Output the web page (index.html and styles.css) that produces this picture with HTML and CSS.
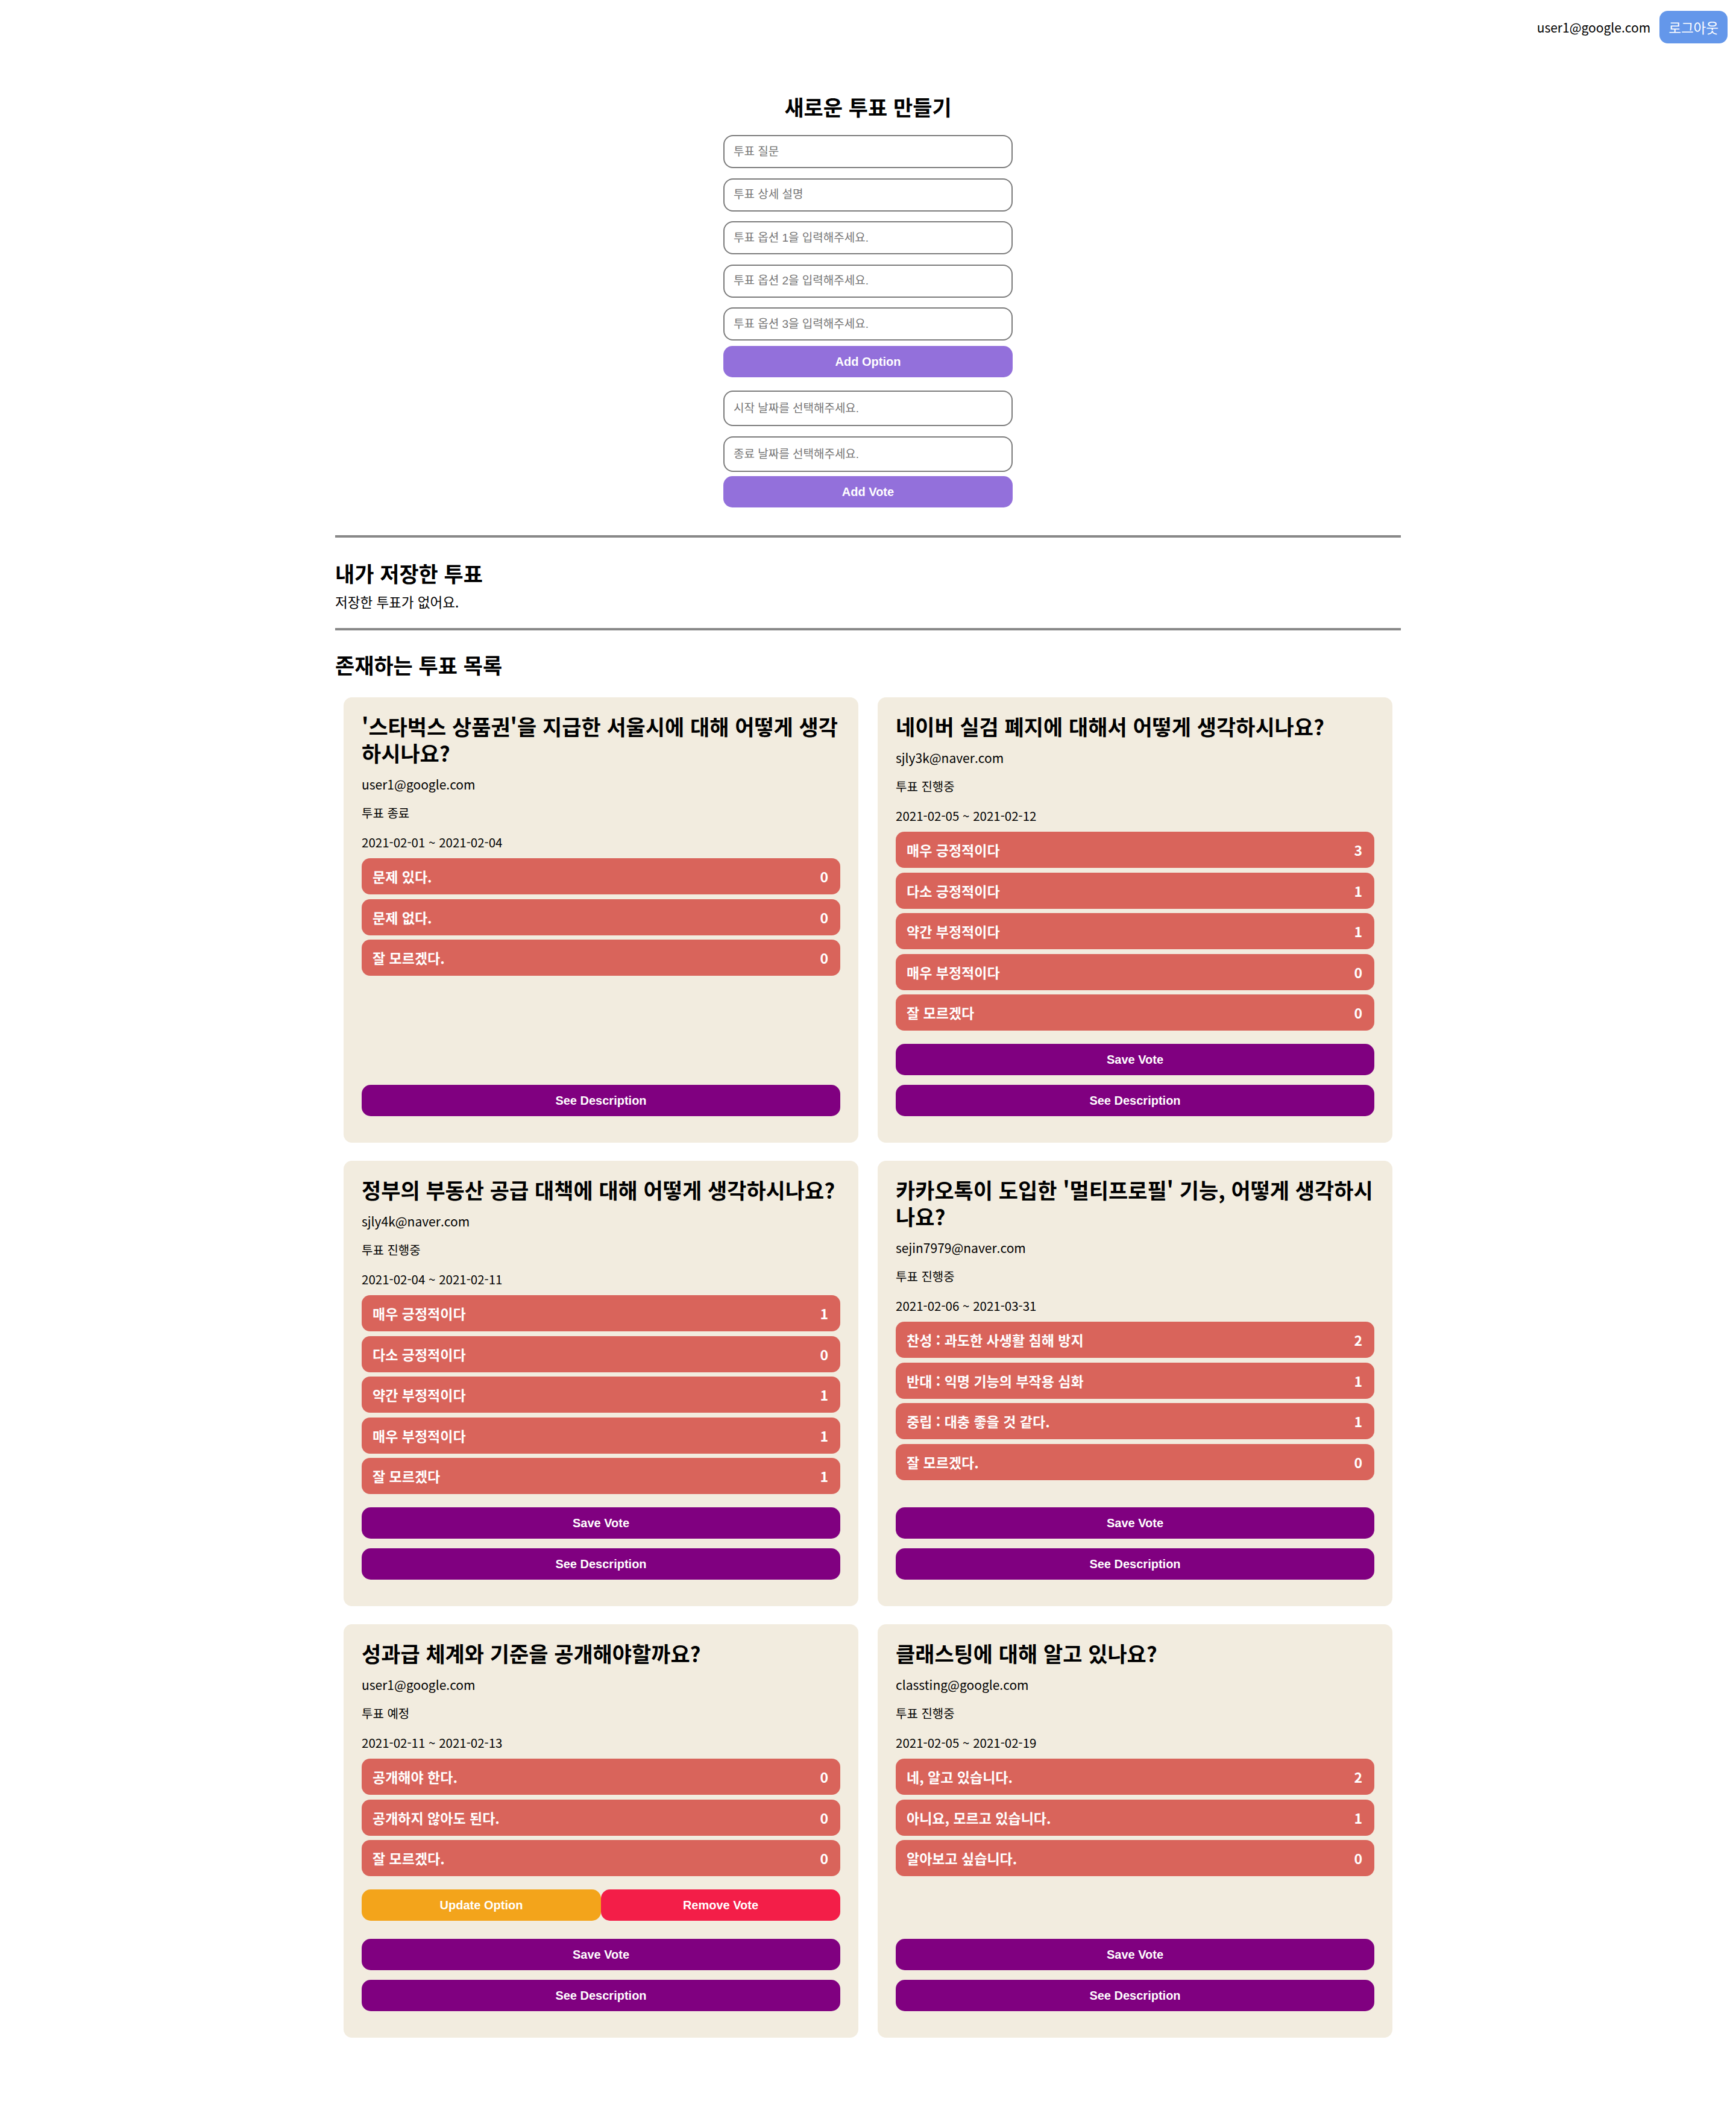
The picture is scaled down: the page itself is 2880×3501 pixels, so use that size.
FILE: index.html
```html
<!DOCTYPE html>
<html lang="ko">
<head>
<meta charset="utf-8">
<title>투표</title>
<link rel="stylesheet" href="styles.css">
</head>
<body>
<header class="topbar">
  <span class="topbar-email">user1@google.com</span>
  <button class="logout" type="button">로그아웃</button>
</header>

<form class="create">
  <h2 class="create-title">새로운 투표 만들기</h2>
  <div class="option-fields">
    <input class="field" type="text" placeholder="투표 질문">
    <input class="field" type="text" placeholder="투표 상세 설명">
    <input class="field" type="text" placeholder="투표 옵션 1을 입력해주세요.">
    <input class="field" type="text" placeholder="투표 옵션 2을 입력해주세요.">
    <input class="field" type="text" placeholder="투표 옵션 3을 입력해주세요.">
  </div>
  <button class="btn btn-lavender btn-add-option" type="button">Add Option</button>
  <div class="date-fields">
    <input class="field field-date" type="text" placeholder="시작 날짜를 선택해주세요.">
    <input class="field field-date" type="text" placeholder="종료 날짜를 선택해주세요.">
  </div>
  <button class="btn btn-lavender btn-add-vote" type="button">Add Vote</button>
</form>

<hr class="divider divider-first">

<section class="section saved">
  <h3 class="section-title">내가 저장한 투표</h3>
  <p class="saved-empty">저장한 투표가 없어요.</p>
</section>

<hr class="divider divider-second">

<section class="section list">
  <h3 class="section-title">존재하는 투표 목록</h3>
  <div class="card-grid">

    <article class="card">
      <h4 class="card-title">'스타벅스 상품권'을 지급한 서울시에 대해 어떻게 생각하시나요?</h4>
      <p class="card-author">user1@google.com</p>
      <p class="card-status">투표 종료</p>
      <p class="card-period">2021-02-01 ~ 2021-02-04</p>
      <ul class="options">
        <li class="option"><span>문제 있다.</span><span>0</span></li>
        <li class="option"><span>문제 없다.</span><span>0</span></li>
        <li class="option"><span>잘 모르겠다.</span><span>0</span></li>
      </ul>
      <div class="actions">
        <button class="btn btn-purple" type="button">See Description</button>
      </div>
    </article>

    <article class="card">
      <h4 class="card-title">네이버 실검 폐지에 대해서 어떻게 생각하시나요?</h4>
      <p class="card-author">sjly3k@naver.com</p>
      <p class="card-status">투표 진행중</p>
      <p class="card-period">2021-02-05 ~ 2021-02-12</p>
      <ul class="options">
        <li class="option"><span>매우 긍정적이다</span><span>3</span></li>
        <li class="option"><span>다소 긍정적이다</span><span>1</span></li>
        <li class="option"><span>약간 부정적이다</span><span>1</span></li>
        <li class="option"><span>매우 부정적이다</span><span>0</span></li>
        <li class="option"><span>잘 모르겠다</span><span>0</span></li>
      </ul>
      <div class="actions">
        <button class="btn btn-purple" type="button">Save Vote</button>
        <button class="btn btn-purple" type="button">See Description</button>
      </div>
    </article>

    <article class="card">
      <h4 class="card-title">정부의 부동산 공급 대책에 대해 어떻게 생각하시나요?</h4>
      <p class="card-author">sjly4k@naver.com</p>
      <p class="card-status">투표 진행중</p>
      <p class="card-period">2021-02-04 ~ 2021-02-11</p>
      <ul class="options">
        <li class="option"><span>매우 긍정적이다</span><span>1</span></li>
        <li class="option"><span>다소 긍정적이다</span><span>0</span></li>
        <li class="option"><span>약간 부정적이다</span><span>1</span></li>
        <li class="option"><span>매우 부정적이다</span><span>1</span></li>
        <li class="option"><span>잘 모르겠다</span><span>1</span></li>
      </ul>
      <div class="actions">
        <button class="btn btn-purple" type="button">Save Vote</button>
        <button class="btn btn-purple" type="button">See Description</button>
      </div>
    </article>

    <article class="card">
      <h4 class="card-title">카카오톡이 도입한 '멀티프로필' 기능, 어떻게 생각하시나요?</h4>
      <p class="card-author">sejin7979@naver.com</p>
      <p class="card-status">투표 진행중</p>
      <p class="card-period">2021-02-06 ~ 2021-03-31</p>
      <ul class="options">
        <li class="option"><span>찬성 : 과도한 사생활 침해 방지</span><span>2</span></li>
        <li class="option"><span>반대 : 익명 기능의 부작용 심화</span><span>1</span></li>
        <li class="option"><span>중립 : 대충 좋을 것 같다.</span><span>1</span></li>
        <li class="option"><span>잘 모르겠다.</span><span>0</span></li>
      </ul>
      <div class="actions">
        <button class="btn btn-purple" type="button">Save Vote</button>
        <button class="btn btn-purple" type="button">See Description</button>
      </div>
    </article>

    <article class="card">
      <h4 class="card-title">성과급 체계와 기준을 공개해야할까요?</h4>
      <p class="card-author">user1@google.com</p>
      <p class="card-status">투표 예정</p>
      <p class="card-period">2021-02-11 ~ 2021-02-13</p>
      <ul class="options">
        <li class="option"><span>공개해야 한다.</span><span>0</span></li>
        <li class="option"><span>공개하지 않아도 된다.</span><span>0</span></li>
        <li class="option"><span>잘 모르겠다.</span><span>0</span></li>
      </ul>
      <div class="manage">
        <button class="btn btn-orange" type="button">Update Option</button>
        <button class="btn btn-red" type="button">Remove Vote</button>
      </div>
      <div class="actions">
        <button class="btn btn-purple" type="button">Save Vote</button>
        <button class="btn btn-purple" type="button">See Description</button>
      </div>
    </article>

    <article class="card">
      <h4 class="card-title">클래스팅에 대해 알고 있나요?</h4>
      <p class="card-author">classting@google.com</p>
      <p class="card-status">투표 진행중</p>
      <p class="card-period">2021-02-05 ~ 2021-02-19</p>
      <ul class="options">
        <li class="option"><span>네, 알고 있습니다.</span><span>2</span></li>
        <li class="option"><span>아니요, 모르고 있습니다.</span><span>1</span></li>
        <li class="option"><span>알아보고 싶습니다.</span><span>0</span></li>
      </ul>
      <div class="actions">
        <button class="btn btn-purple" type="button">Save Vote</button>
        <button class="btn btn-purple" type="button">See Description</button>
      </div>
    </article>

  </div>
</section>
</body>
</html>
```

FILE: styles.css
```css
* {
  box-sizing: border-box;
}

body {
  margin: 0;
  padding-bottom: 120px;
  background: #ffffff;
  color: #000000;
  font-family: "Noto Sans CJK KR", "Noto Sans", sans-serif;
}

/* top bar */
.topbar {
  display: flex;
  justify-content: flex-end;
  align-items: center;
  gap: 15px;
  padding: 18px 14px 0;
}

.topbar-email {
  font-size: 21px;
}

.logout {
  height: 54px;
  padding: 0 15px;
  border: none;
  border-radius: 14px;
  background: #6497ea;
  color: #ffffff;
  font-family: "Noto Sans CJK KR", sans-serif;
  font-size: 22.5px;
}

/* buttons */
.btn {
  display: block;
  width: 100%;
  height: 52px;
  border: none;
  border-radius: 15px;
  color: #ffffff;
  font-family: "Liberation Sans", "Noto Sans CJK KR", sans-serif;
  font-size: 20px;
  font-weight: 700;
}

.btn-lavender { background: #9370db; }
.btn-purple { background: #800080; }
.btn-orange { background: #f3a41b; }
.btn-red { background: #f31e48; }

/* create form */
.create {
  width: 480px;
  margin: 83px auto 0;
  display: flex;
  flex-direction: column;
}

.create-title {
  margin: 0 0 25px;
  text-align: center;
  font-size: 35px;
  line-height: 44px;
  font-weight: 700;
}

.option-fields,
.date-fields {
  display: flex;
  flex-direction: column;
}

.option-fields { gap: 16.5px; }

.field {
  width: 100%;
  height: 55px;
  padding: 0 15px;
  border: 2px solid #7b7b7b;
  border-radius: 16px;
  background: #ffffff;
  color: #000000;
  font-family: "Liberation Sans", "Noto Sans CJK KR", sans-serif;
  font-size: 19px;
  outline: none;
}

.field::placeholder {
  color: #757575;
}

.field-date {
  height: 59px;
}

.btn-add-option { margin-top: 9px; }

.date-fields {
  margin-top: 22px;
  gap: 17px;
}

.btn-add-vote { margin-top: 7px; }

/* dividers and sections */
.divider {
  display: block;
  width: 1768px;
  height: 4px;
  margin: 0 auto;
  border: none;
  background: #888888;
}

.divider-first { margin-top: 46px; }
.divider-second { margin-top: 30px; }

.section {
  width: 1768px;
  margin: 0 auto;
}

.section-title {
  margin: 0;
  font-size: 35px;
  line-height: 40px;
  font-weight: 700;
}

.saved .section-title { margin-top: 39px; }

.saved-empty {
  margin: 13px 0 0;
  font-size: 22.5px;
  line-height: 28px;
}

.list .section-title { margin-top: 37px; }

/* cards */
.card-grid {
  display: grid;
  grid-template-columns: 1fr 1fr;
  column-gap: 32px;
  row-gap: 30px;
  margin-top: 34px;
  padding: 0 14px;
}

.card {
  display: flex;
  flex-direction: column;
  padding: 26px 30px 44px;
  border-radius: 14px;
  background: #f2ecdf;
}

.card-title {
  margin: 0;
  font-size: 35px;
  line-height: 44px;
  font-weight: 700;
}

.card-author {
  margin: 16px 0 0;
  font-size: 21px;
  line-height: 28px;
}

.card-status {
  margin: 21px 0 0;
  font-size: 20px;
  line-height: 26px;
}

.card-period {
  margin: 22px 0 0;
  font-size: 20.5px;
  line-height: 26px;
}

.options {
  display: flex;
  flex-direction: column;
  gap: 7.5px;
  margin: 14px 0 0;
  padding: 0;
  list-style: none;
}

.option {
  display: flex;
  justify-content: space-between;
  align-items: center;
  height: 60px;
  padding: 0 20px 0 18px;
  border-radius: 14px;
  background: #d9645b;
  color: #ffffff;
  font-size: 23px;
  font-weight: 600;
}

.manage {
  display: grid;
  grid-template-columns: 1fr 1fr;
  margin: 22px 0 8px;
}

.actions {
  display: flex;
  flex-direction: column;
  gap: 16px;
  margin-top: auto;
  padding-top: 22px;
}
```
